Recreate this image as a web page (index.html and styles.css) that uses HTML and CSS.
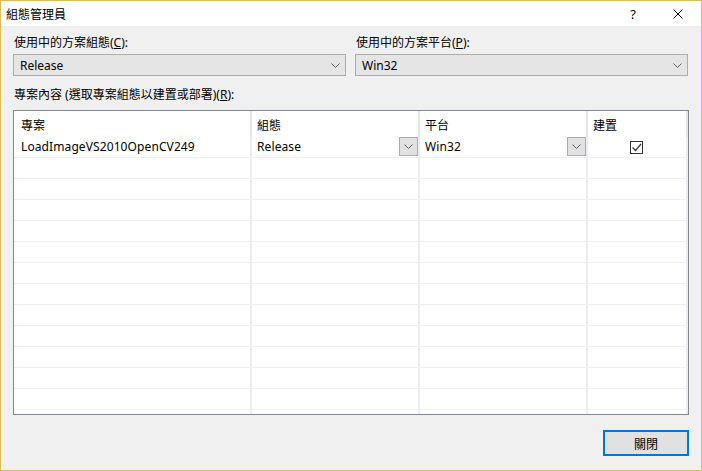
FILE: index.html
```html
<!DOCTYPE html>
<html>
<head>
<meta charset="utf-8">
<link rel="stylesheet" href="styles.css">
</head>
<body>
<div class="window">
  <div class="titlebar">
    <span class="title">組態管理員</span>
    <span class="help">?</span>
    <span class="close"><svg width="10" height="10" viewBox="0 0 10 10"><path d="M0.5 0.5 L9.5 9.5 M9.5 0.5 L0.5 9.5" stroke="#000" stroke-width="1" fill="none"/></svg></span>
  </div>
  <div class="content">
    <div class="combos">
      <div class="field">
        <div class="label">使用中的方案組態(<u>C</u>):</div>
        <div class="combo"><span>Release</span><svg class="chev" width="9" height="5" viewBox="0 0 9 5"><path d="M0.5 0.5 L4.5 4.5 L8.5 0.5" stroke="#606060" fill="none"/></svg></div>
      </div>
      <div class="field">
        <div class="label">使用中的方案平台(<u>P</u>):</div>
        <div class="combo"><span>Win32</span><svg class="chev" width="9" height="5" viewBox="0 0 9 5"><path d="M0.5 0.5 L4.5 4.5 L8.5 0.5" stroke="#606060" fill="none"/></svg></div>
      </div>
    </div>
    <div class="label grid-label">專案內容 (選取專案組態以建置或部署)(<u>R</u>):</div>
    <div class="grid">
      <div class="cell head first">專案</div>
      <div class="cell head">組態</div>
      <div class="cell head">平台</div>
      <div class="cell head">建置</div>

      <div class="cell row first">LoadImageVS2010OpenCV249</div>
      <div class="cell row dd"><span>Release</span><span class="ddbtn"><svg width="9" height="5" viewBox="0 0 9 5"><path d="M0.5 0.5 L4.5 4.5 L8.5 0.5" stroke="#606060" fill="none"/></svg></span></div>
      <div class="cell row dd"><span>Win32</span><span class="ddbtn"><svg width="9" height="5" viewBox="0 0 9 5"><path d="M0.5 0.5 L4.5 4.5 L8.5 0.5" stroke="#606060" fill="none"/></svg></span></div>
      <div class="cell row chk"><span class="checkbox"><svg width="11" height="11" viewBox="0 0 11 11"><path d="M1.5 5.5 L4.5 8.5 L10 2" stroke="#333" stroke-width="1.2" fill="none"/></svg></span></div>

      <div class="cell row first"></div><div class="cell row"></div><div class="cell row"></div><div class="cell row"></div>
      <div class="cell row first"></div><div class="cell row"></div><div class="cell row"></div><div class="cell row"></div>
      <div class="cell row first"></div><div class="cell row"></div><div class="cell row"></div><div class="cell row"></div>
      <div class="cell row first"></div><div class="cell row"></div><div class="cell row"></div><div class="cell row"></div>
      <div class="cell row first"></div><div class="cell row"></div><div class="cell row"></div><div class="cell row"></div>
      <div class="cell row first"></div><div class="cell row"></div><div class="cell row"></div><div class="cell row"></div>
      <div class="cell row first"></div><div class="cell row"></div><div class="cell row"></div><div class="cell row"></div>
      <div class="cell row first"></div><div class="cell row"></div><div class="cell row"></div><div class="cell row"></div>
      <div class="cell row first"></div><div class="cell row"></div><div class="cell row"></div><div class="cell row"></div>
      <div class="cell row first"></div><div class="cell row"></div><div class="cell row"></div><div class="cell row"></div>
      <div class="cell row first"></div><div class="cell row"></div><div class="cell row"></div><div class="cell row"></div>
      <div class="cell row first"></div><div class="cell row"></div><div class="cell row"></div><div class="cell row"></div>
      <div class="cell row first"></div><div class="cell row"></div><div class="cell row"></div><div class="cell row"></div>
    </div>
    <div class="buttons">
      <button class="btn">關閉</button>
    </div>
  </div>
</div>
</body>
</html>
```

FILE: styles.css
```css
* { box-sizing: border-box; }
html, body { margin: 0; padding: 0; }
body {
  font-family: "Noto Sans", "Noto Sans CJK TC", sans-serif;
  font-size: 12px;
  color: #000;
  background: #f0f0f0;
}
.window {
  width: 702px;
  height: 471px;
  border: 1px solid #d8bf5a;
  background: #f0f0f0;
  display: flex;
  flex-direction: column;
  overflow: hidden;
}
.titlebar {
  height: 25px;
  background: #fff;
  display: flex;
  align-items: center;
  padding-left: 5px;
  flex-shrink: 0;
}
.title {
  flex: 1;
  font-family: "Noto Sans CJK TC", sans-serif;
  font-size: 12px;
  line-height: 16px;
}
.help {
  width: 46px;
  text-align: center;
  font-size: 13px;
  padding-left: 2px;
}
.close {
  width: 46px;
  display: flex;
  justify-content: center;
  align-items: center;
}
.content {
  padding: 9px 12px 0 12px;
}
.combos {
  display: flex;
  gap: 9px;
}
.field { width: 333px; }
.label {
  font-family: "Noto Sans", "Noto Sans CJK TC", sans-serif;
  line-height: 16px;
  height: 16px;
  padding-left: 1px;
  margin-bottom: 3px;
}
.label u { text-decoration: underline; }
.combo {
  height: 22px;
  border: 1px solid #adadad;
  background: #e5e5e5;
  display: flex;
  align-items: center;
  justify-content: space-between;
  padding: 1px 5px 0 6px;
}
.combo span { line-height: 16px; }
.grid-label {
  margin-top: 11px;
  margin-bottom: 7px;
}
.grid {
  border: 1px solid #828790;
  background: #fff;
  height: 305px;
  display: grid;
  grid-template-columns: 238px 168px 168px 100px;
  grid-auto-rows: 21px;
  grid-template-rows: 26px;
  align-content: start;
  overflow: hidden;
}
.cell {
  border-right: 2px solid #eaedf1;
  border-bottom: 1px solid #f0f0f0;
  padding-left: 5px;
  display: flex;
  align-items: center;
  line-height: 16px;
  white-space: nowrap;
  letter-spacing: 0.1px;
}
.cell.first { padding-left: 7px; }
.cell.head {
  border-bottom: none;
  border-right-color: #e5e5e5;
  font-family: "Noto Sans CJK TC", sans-serif;
  padding-top: 1px;
}
.cell.dd {
  justify-content: space-between;
  padding-right: 0;
}
.ddbtn {
  width: 19px;
  height: 19px;
  border: 1px solid #adadad;
  background: #e1e1e1;
  display: flex;
  align-items: center;
  justify-content: center;
  margin-top: -1px;
}
.cell.chk {
  justify-content: center;
  padding-left: 0;
}
.checkbox {
  width: 13px;
  height: 13px;
  border: 1px solid #333;
  display: flex;
  align-items: center;
  justify-content: center;
  background: #fff;
  margin-right: 2px;
}
.buttons {
  display: flex;
  justify-content: flex-end;
  margin-top: 15px;
}
.btn {
  width: 86px;
  height: 26px;
  border: 2px solid #0078d7;
  background: #e1e1e1;
  font-family: "Noto Sans CJK TC", sans-serif;
  font-size: 12px;
  color: #000;
  padding: 0;
}
```
